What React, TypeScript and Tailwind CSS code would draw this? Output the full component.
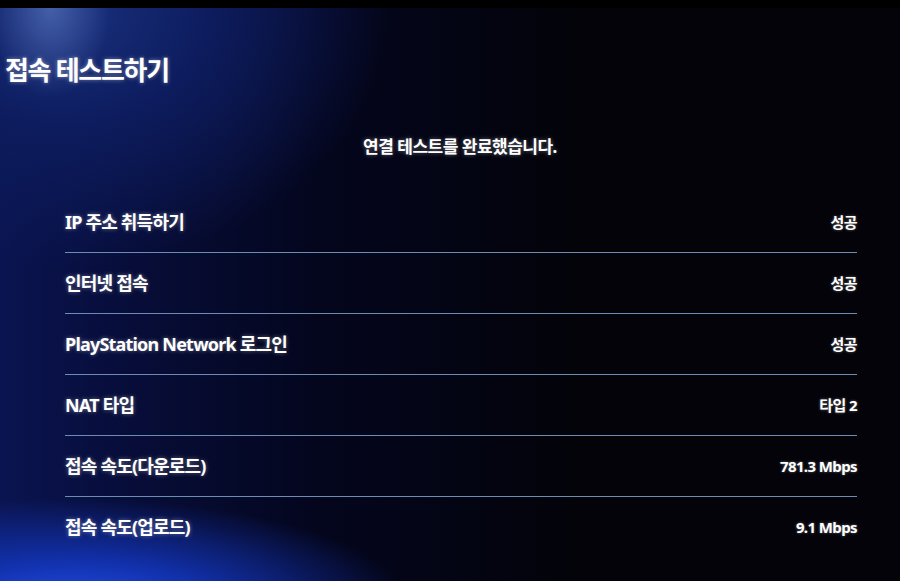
const rows = [
  { label: 'IP 주소 취득하기', value: '성공' },
  { label: '인터넷 접속', value: '성공' },
  { label: 'PlayStation Network 로그인', value: '성공' },
  { label: 'NAT 타입', value: '타입 2' },
  { label: '접속 속도(다운로드)', value: '781.3 Mbps' },
  { label: '접속 속도(업로드)', value: '9.1 Mbps' },
];

export default function App() {
  return (
    <div className="w-[900px] h-[581px] overflow-hidden bg-[#030309] font-['Noto_Sans','Noto_Sans_CJK_KR',sans-serif] text-white">
      <div className="h-[8px] bg-black" />
      <div className="h-[573px] bg-[radial-gradient(ellipse_60px_90px_at_50px_0px,rgba(120,150,220,0.45)_0%,transparent_100%),radial-gradient(ellipse_330px_260px_at_60px_0px,#1a3280_0%,#0d1c5e_45%,transparent_100%),radial-gradient(ellipse_340px_110px_at_70px_600px,#2450e8_0%,#1232b0_40%,transparent_100%),linear-gradient(90deg,#0a1450_0%,#070d38_15%,#04061e_35%,#030309_65%)]">
        <h1 className="pt-[47px] pl-[5px] text-[26px] leading-[30px] font-bold tracking-[-1.3px] [text-shadow:0_0_4px_rgba(255,255,255,0.45)]">
          접속 테스트하기
        </h1>
        <p className="mt-[50px] text-center pl-[20px] text-[17px] leading-[24px] font-bold tracking-[-0.5px] [text-shadow:0_0_4px_rgba(255,255,255,0.4)]">
          연결 테스트를 완료했습니다.
        </p>
        <div className="mt-[33px] pl-[65px] pr-[43px]">
          {rows.map((r, i) => (
            <div
              key={r.label}
              className={
                'flex items-center justify-between h-[61px] ' +
                (i < rows.length - 1 ? 'border-b border-[#6d8cb3]' : '')
              }
            >
              <span className="text-[18px] font-bold tracking-[-0.8px] [text-shadow:0_0_4px_rgba(255,255,255,0.4)]">
                {r.label}
              </span>
              <span className="text-[15px] font-bold tracking-[-0.6px] [text-shadow:0_0_3px_rgba(255,255,255,0.4)]">
                {r.value}
              </span>
            </div>
          ))}
        </div>
      </div>
    </div>
  );
}
